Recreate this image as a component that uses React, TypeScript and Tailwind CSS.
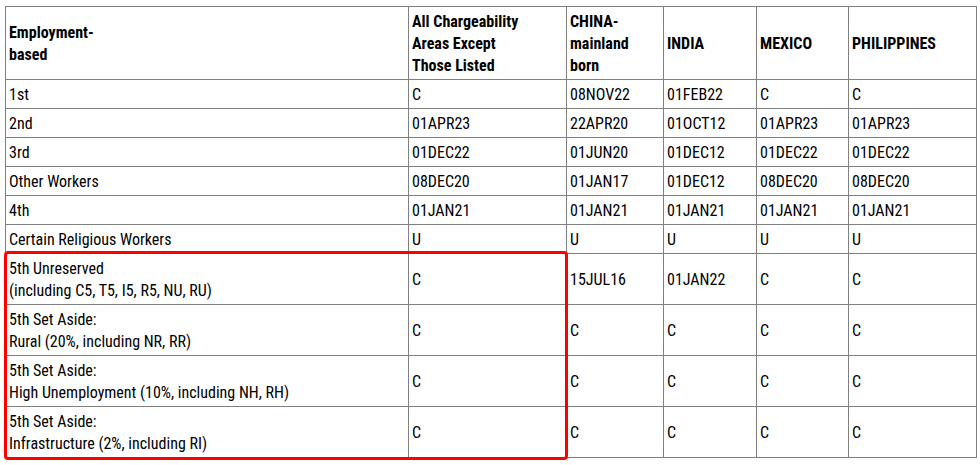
import React from 'react';

const headers = ['All Chargeability\nAreas Except\nThose Listed', 'CHINA-\nmainland\nborn', 'INDIA', 'MEXICO', 'PHILIPPINES'];

const rows: [string, string[]][] = [
  ['1st', ['C', '08NOV22', '01FEB22', 'C', 'C']],
  ['2nd', ['01APR23', '22APR20', '01OCT12', '01APR23', '01APR23']],
  ['3rd', ['01DEC22', '01JUN20', '01DEC12', '01DEC22', '01DEC22']],
  ['Other Workers', ['08DEC20', '01JAN17', '01DEC12', '08DEC20', '08DEC20']],
  ['4th', ['01JAN21', '01JAN21', '01JAN21', '01JAN21', '01JAN21']],
  ['Certain Religious Workers', ['U', 'U', 'U', 'U', 'U']],
  ['5th Unreserved\n(including C5, T5, I5, R5, NU, RU)', ['C', '15JUL16', '01JAN22', 'C', 'C']],
  ['5th Set Aside:\nRural (20%, including NR, RR)', ['C', 'C', 'C', 'C', 'C']],
  ['5th Set Aside:\nHigh Unemployment (10%, including NH, RH)', ['C', 'C', 'C', 'C', 'C']],
  ['5th Set Aside:\nInfrastructure (2%, including RI)', ['C', 'C', 'C', 'C', 'C']],
];

const cell = 'border border-[#808080] px-[3px] pt-[4px] pb-[2px] align-middle text-left leading-[22px] whitespace-pre-line';

export default function App() {
  return (
    <div className="w-[980px] h-[465px] bg-white text-black text-[16px] font-stretch-condensed [font-family:'Roboto_Condensed','Liberation_Sans_Narrow',Roboto,sans-serif]">
      <div className="relative ml-[5px] pt-[6px] w-[971px]">
        <table className="w-[971px] table-fixed border-collapse">
          <colgroup>
            <col className="w-[403px]" />
            <col className="w-[158px]" />
            <col className="w-[97px]" />
            <col className="w-[93px]" />
            <col className="w-[92px]" />
            <col className="w-[128px]" />
          </colgroup>
          <thead>
            <tr>
              <th className={`${cell} font-bold`}>{'Employment-\nbased'}</th>
              {headers.map((h) => (
                <th key={h} className={`${cell} font-bold`}>{h}</th>
              ))}
            </tr>
          </thead>
          <tbody>
            {rows.map(([label, vals]) => (
              <tr key={label}>
                <td className={cell}>{label}</td>
                {vals.map((v, i) => (
                  <td key={i} className={cell}>{v}</td>
                ))}
              </tr>
            ))}
          </tbody>
        </table>
        {/* Highlight around the 5th preference rows */}
        <div className="absolute left-[-1px] top-[251px] w-[564px] h-[209px] border-[3px] border-[#ff0000] rounded-[4px] pointer-events-none" />
      </div>
    </div>
  );
}
